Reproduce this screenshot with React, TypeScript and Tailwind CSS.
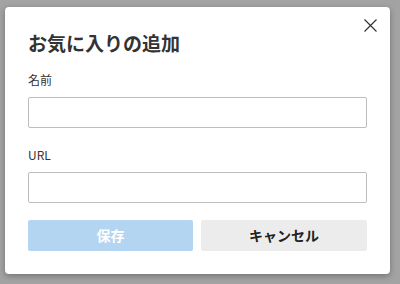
import React from "react";

export default function App() {
  return (
    <div
      className="w-[400px] h-[284px] bg-[#a3a3a3] pt-[7px] pl-[5px] overflow-hidden"
      style={{ fontFamily: '"Noto Sans CJK JP", "Noto Sans", sans-serif' }}
    >
      <div className="relative w-[385px] h-[267px] bg-white rounded-[4px] shadow-[0_2px_6px_rgba(0,0,0,0.3)] px-[23px] pt-[22px]">
        <button className="absolute right-[12px] top-[10px] w-[16px] h-[16px] flex items-center justify-center text-[#333]">
          <svg width="13" height="13" viewBox="0 0 13 13" fill="none" stroke="currentColor" strokeWidth="1.2">
            <path d="M0.5 0.5 L12.5 12.5 M12.5 0.5 L0.5 12.5" />
          </svg>
        </button>
        <h1 className="text-[19px] leading-[28px] font-bold text-[#333]">お気に入りの追加</h1>
        <label className="block mt-[15px] text-[12px] leading-[16px] text-[#333]">名前</label>
        <input className="block mt-[9px] w-[339px] h-[31px] border border-[#bdbdbd] rounded-[2px] outline-none px-2 text-[13px]" />
        <label className="block mt-[19px] text-[12px] leading-[16px] text-[#333]">URL</label>
        <input className="block mt-[9px] w-[339px] h-[31px] border border-[#bdbdbd] rounded-[2px] outline-none px-2 text-[13px]" />
        <div className="mt-[17px] flex gap-[8px] w-[339px]">
          <button className="w-[165px] h-[31px] bg-[#b3d5f1] rounded-[2px] text-white text-[14px] font-bold">保存</button>
          <button className="w-[166px] h-[31px] bg-[#ececec] rounded-[2px] text-[#222] text-[14px] font-bold">キャンセル</button>
        </div>
      </div>
    </div>
  );
}
